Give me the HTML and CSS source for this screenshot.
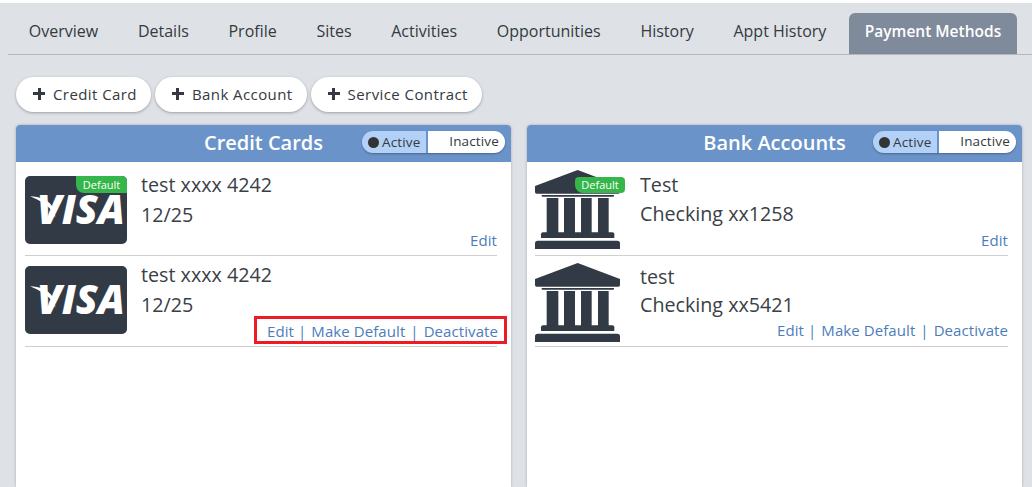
FILE: index.html
```html
<!DOCTYPE html>
<html lang="en">
<head>
<meta charset="utf-8">
<title>Payment Methods</title>
<link rel="stylesheet" href="styles.css">
</head>
<body>
<svg class="defs" width="0" height="0" aria-hidden="true">
  <symbol id="bank" viewBox="0 0 255 237">
    <path d="M128 0 255 48V66Q255 71 250 71H5Q0 71 0 66V48Z"/>
    <path d="M20 75H237V78Q237 80 234 80H23Q20 80 20 78Z"/>
    <rect x="35" y="84" width="35" height="106"/><rect x="87" y="84" width="33" height="106"/><rect x="138" y="84" width="32" height="106"/><rect x="189" y="84" width="32" height="106"/>
    <path d="M24 187H232Q238 187 238 193V204H18V193Q18 187 24 187Z"/>
    <path d="M8 212H247Q255 212 255 220V237H0V220Q0 212 8 212Z"/>
  </symbol>
  <symbol id="swoosh" viewBox="0 0 34 30">
    <path d="M0 1C12 1 24 6 29 14C32 19 33 24 33 29C30 20 24 11 0 1Z"/>
  </symbol>
</svg>
<div class="page">
  <nav class="tabs">
    <a class="tab">Overview</a><a class="tab">Details</a><a class="tab">Profile</a><a class="tab">Sites</a><a class="tab">Activities</a><a class="tab">Opportunities</a><a class="tab">History</a><a class="tab">Appt History</a><a class="tab tab-active">Payment Methods</a>
  </nav>
  <div class="actions-bar">
    <button class="add-btn"><span class="plus"></span>Credit Card</button>
    <button class="add-btn"><span class="plus"></span>Bank Account</button>
    <button class="add-btn"><span class="plus"></span>Service Contract</button>
  </div>
  <div class="panels">
    <section class="panel panel-cards">
      <header class="panel-head">
        <h2>Credit Cards</h2>
        <div class="toggle"><span class="tg-on"><i class="dot"></i>Active</span><span class="tg-off">Inactive</span></div>
      </header>
      <div class="panel-body">
        <div class="row row-first">
          <div class="visa"><svg class="swoosh"><use href="#swoosh"/></svg><span class="visa-word">VISA</span><span class="badge">Default</span></div>
          <div class="info">
            <div class="line">test xxxx 4242</div>
            <div class="line">12/25</div>
            <div class="links"><a>Edit</a></div>
          </div>
        </div>
        <div class="row">
          <div class="visa"><svg class="swoosh"><use href="#swoosh"/></svg><span class="visa-word">VISA</span></div>
          <div class="info">
            <div class="line">test xxxx 4242</div>
            <div class="line">12/25</div>
            <div class="links"><span class="flagged"><a>Edit</a> <b>|</b> <a>Make Default</a> <b>|</b> <a>Deactivate</a></span></div>
          </div>
        </div>
      </div>
    </section>
    <section class="panel panel-banks">
      <header class="panel-head">
        <h2>Bank Accounts</h2>
        <div class="toggle"><span class="tg-on"><i class="dot"></i>Active</span><span class="tg-off">Inactive</span></div>
      </header>
      <div class="panel-body">
        <div class="row row-first">
          <div class="bank"><svg class="bank-icon"><use href="#bank"/></svg><span class="badge">Default</span></div>
          <div class="info">
            <div class="line">Test</div>
            <div class="line">Checking xx1258</div>
            <div class="links"><a>Edit</a></div>
          </div>
        </div>
        <div class="row">
          <div class="bank"><svg class="bank-icon"><use href="#bank"/></svg></div>
          <div class="info">
            <div class="line">test</div>
            <div class="line">Checking xx5421</div>
            <div class="links"><a>Edit</a> <b>|</b> <a>Make Default</a> <b>|</b> <a>Deactivate</a></div>
          </div>
        </div>
      </div>
    </section>
  </div>
</div>
</body>
</html>
```
FILE: styles.css
```css
* { box-sizing: border-box; }
html, body { height: 100%; }
body {
  margin: 0;
  background: #fff;
  font-family: "Open Sans", sans-serif;
  color: #343a40;
  overflow: hidden;
}
.defs { position: absolute; }
.page {
  margin-top: 3px;
  height: 484px;
  background: #dee2e6;
  padding: 10px 10px 0 8px;
  overflow: hidden;
}
.tabs {
  display: flex;
  height: 42px;
  border-bottom: 1px solid #b4b8bc;
  margin-right: -10px;
  padding: 0 15px 0 1px;
}
.tab {
  height: 41px;
  padding: 0 19.85px;
  font-size: 16px;
  line-height: 37px;
  color: #343a40;
  font-weight: 500;
  white-space: nowrap;
}
.tab-active {
  width: 168px;
  margin-left: auto;
  background: #7f8a9a;
  color: #fff;
  font-size: 15.5px;
  font-weight: 600;
  border-radius: 6px 6px 0 0;
  padding: 0;
  text-align: center;
}
.actions-bar {
  display: flex;
  gap: 4px;
  margin: 22px 0 13px 8px;
}
.add-btn {
  height: 35px;
  border: 0;
  border-radius: 18px;
  background: #fff;
  box-shadow: 0 1px 3px rgba(0,0,0,.3);
  font: 15px "Open Sans", sans-serif;
  letter-spacing: .42px;
  color: #343a40;
  padding: 0 14px 2px 17px;
  display: flex;
  align-items: center;
  white-space: nowrap;
}
.plus {
  width: 12px;
  height: 12px;
  margin-right: 8px;
  background:
    linear-gradient(#343a40, #343a40) center / 12px 3px no-repeat,
    linear-gradient(#343a40, #343a40) center / 3px 12px no-repeat;
}
.panels {
  display: flex;
  gap: 16px;
  margin-left: 8px;
}
.panel {
  width: 495px;
  height: 362px;
  background: #fff;
  border-radius: 4px 4px 0 0;
  box-shadow: 0 0 3px rgba(0,0,0,.25);
}
.panel-head {
  height: 37px;
  background: #6a93c9;
  border-radius: 4px 4px 0 0;
  position: relative;
  display: flex;
  justify-content: center;
  align-items: center;
}
.panel-head h2 {
  margin: -2px 0 0 0;
  font-size: 20px;
  font-weight: 600;
  color: #fff;
}
.toggle {
  position: absolute;
  right: 6px;
  top: 6px;
  height: 22px;
  display: flex;
  border-radius: 11px;
  overflow: hidden;
  box-shadow: 0 1px 2px rgba(0,0,0,.3);
  font-size: 13.5px;
  letter-spacing: .15px;
  line-height: 21px;
  color: #343a40;
}
.tg-on {
  width: 66px;
  background: #b3d0f7;
  padding-left: 6px;
  display: flex;
  align-items: center;
  gap: 3px;
  border-right: 2px solid #6a93c9;
}
.dot {
  width: 11px;
  height: 11px;
  border-radius: 50%;
  background: #343434;
}
.tg-off {
  width: 77px;
  background: #fff;
  text-align: right;
  padding-right: 6px;
}
.panel-body { padding: 0 14px 0 9px; }
.panel-banks .panel-body { padding-left: 8px; }
.row {
  display: flex;
  height: 91px;
  padding-top: 10px;
  border-bottom: 1px solid #cfcfcf;
}
.row-first { height: 94px; padding-top: 14px; }
.visa {
  position: relative;
  width: 102px;
  height: 68px;
  flex: none;
  background: #323a45;
  border-radius: 5px;
  overflow: hidden;
  color: #fff;
}
.visa-word {
  position: absolute;
  left: 12px;
  top: 18px;
  font: italic 800 40px/30px "Open Sans", sans-serif;
}
.swoosh {
  position: absolute;
  left: 5px;
  top: 19px;
  width: 26px;
  height: 24px;
  fill: #fff;
}
.badge {
  position: absolute;
  right: 0;
  top: 0;
  width: 51px;
  height: 17px;
  background: #35b64a;
  color: #fff;
  font-size: 11px;
  line-height: 17px;
  text-align: center;
  border-radius: 0 4px 0 8px;
}
.bank {
  position: relative;
  width: 85px;
  height: 79px;
  flex: none;
  margin-top: -3px;
}
.row-first .bank { margin-top: -6px; }
.bank-icon {
  display: block;
  width: 85px;
  height: 79px;
  fill: #323a45;
}
.bank .badge { right: -5px; top: 7px; width: 50px; height: 16px; line-height: 16px; border-radius: 4px 4px 4px 8px; }
.info {
  flex: 1;
  margin-left: 14px;
  position: relative;
}
.panel-banks .info { margin-left: 20px; }
.line {
  font-size: 19.7px;
  line-height: 30px;
  margin-top: -6px;
  margin-bottom: 6px;
  color: #3a4047;
}
.panel-banks .line { margin-bottom: 5px; }
.panel-banks .row:not(.row-first) .line:first-child { margin-top: -4px; margin-bottom: 4px; }
.links {
  position: absolute;
  right: 0;
  top: 54px;
  font-size: 15px;
  letter-spacing: .08px;
  line-height: 20px;
  color: #4c7dbb;
  white-space: nowrap;
}
.links b { font-weight: 400; margin: 0 1px; }
.links b:first-of-type { margin-left: 0; }
.flagged {
  display: block;
  border: 3px solid #ed1c24;
  height: 28px;
  padding: 1px 6px 0 10px;
  margin: -4px -10px 0 0;
  line-height: 22px;
}
```
